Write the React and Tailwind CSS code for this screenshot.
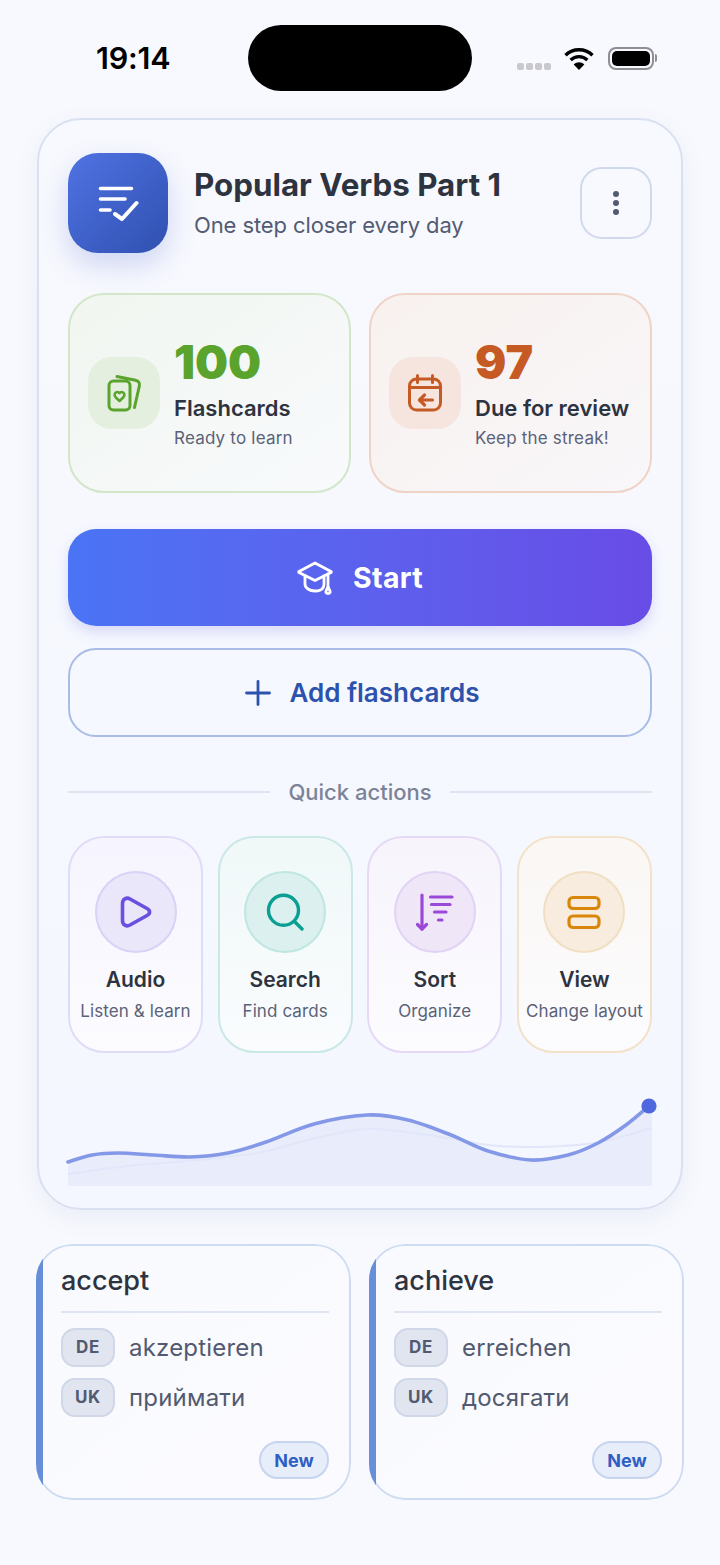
// Smooth line through points (catmull-rom to cubic)
const smooth = (pts) => {
  let d = `M${pts[0][0]} ${pts[0][1]}`;
  for (let i = 0; i < pts.length - 1; i++) {
    const p0 = pts[i - 1] || pts[i];
    const p1 = pts[i];
    const p2 = pts[i + 1];
    const p3 = pts[i + 2] || p2;
    const c1x = p1[0] + (p2[0] - p0[0]) / 6;
    const c1y = p1[1] + (p2[1] - p0[1]) / 6;
    const c2x = p2[0] - (p3[0] - p1[0]) / 6;
    const c2y = p2[1] - (p3[1] - p1[1]) / 6;
    d += ` C${c1x} ${c1y} ${c2x} ${c2y} ${p2[0]} ${p2[1]}`;
  }
  return d;
};

const mainLine = [[0, 67], [24, 60], [50, 58], [86, 60], [122, 62], [160, 58], [198, 47], [246, 29], [299, 20], [340, 25], [383, 40], [420, 56], [463, 65], [500, 60], [530, 48], [558, 30], [581, 11]];
const softLine = [[0, 79], [60, 71], [130, 65], [190, 58], [240, 45], [299, 34], [360, 40], [420, 50], [467, 52], [526, 48], [584, 33]];

const StatusBar = () => (
  <div className="flex h-[118px] items-start">
    <div className="mt-[40px] ml-[96px] w-[152px] text-[30.5px] leading-9 font-semibold tracking-[-0.2px] text-black">
      19:14
    </div>
    <div className="mt-[25px] h-[66px] w-[224px] rounded-[33px] bg-black" />
    <div className="mt-[46px] ml-[45px] flex items-center">
      <div className="mt-[1px] flex gap-[2px] pt-[16px]">
        <span className="h-[7px] w-[7px] rounded-[2px] bg-[#c9c9cd]" />
        <span className="h-[7px] w-[7px] rounded-[2px] bg-[#c9c9cd]" />
        <span className="h-[7px] w-[7px] rounded-[2px] bg-[#c9c9cd]" />
        <span className="h-[7px] w-[7px] rounded-[2px] bg-[#c9c9cd]" />
      </div>
      <svg className="ml-[13px]" width="30" height="23" viewBox="0 0 30 23" fill="none" stroke="black" strokeWidth="3.4">
        <path d="M1.5 8.2C9 1 21 1 28.5 8.2" />
        <path d="M6.6 13C11.5 8.5 18.5 8.5 23.4 13" />
        <path d="M15 23L9.7 17.4C12.8 14.6 17.2 14.6 20.3 17.4Z" fill="black" stroke="none" />
      </svg>
      <div className="ml-[14px] flex items-center">
        <div className="h-[23px] w-[46px] rounded-[8px] border-2 border-[#8e8e93] p-[2px]">
          <div className="h-full w-full rounded-[5px] bg-black" />
        </div>
        <div className="ml-[1px] h-[8px] w-[2px] rounded-r-[2px] bg-[#8e8e93]" />
      </div>
    </div>
  </div>
);

const StatCard = ({ icon, iconBg, number, numColor, title, sub, box }) => (
  <div className={`flex h-[200px] items-center rounded-[36px] border-2 pl-[18px] ${box}`}>
    <div className={`flex h-[72px] w-[72px] shrink-0 items-center justify-center rounded-[24px] ${iconBg}`}>{icon}</div>
    <div className="ml-[14px]">
      <div className={`text-[46.5px] leading-[52px] font-[860] ${numColor}`}>{number}</div>
      <div className="mt-[6px] text-[22px] leading-7 font-semibold whitespace-nowrap text-[#2e3340]">{title}</div>
      <div className="mt-[4px] text-[17px] leading-6 tracking-[0.2px] whitespace-nowrap text-[#5a6278]">{sub}</div>
    </div>
  </div>
);

const ActionCard = ({ icon, title, sub, box, circle }) => (
  <div className={`flex h-[217px] flex-col items-center rounded-[36px] border-2 pt-[33px] ${box}`}>
    <div className={`flex h-[82px] w-[82px] items-center justify-center rounded-full border-2 ${circle}`}>{icon}</div>
    <div className="mt-[13px] text-[21px] leading-7 font-semibold text-[#2e3340]">{title}</div>
    <div className="mt-[5px] text-[17px] leading-6 tracking-[0.1px] whitespace-nowrap text-[#5a6278]">{sub}</div>
  </div>
);

const WordCard = ({ word, de, uk }) => (
  <div className="relative h-[256px] overflow-hidden rounded-[36px] bg-linear-to-br from-[#f9fafe] to-[#fbfbff]">
    {/* accent strip, clipped by the round corners */}
    <div className="absolute top-0 bottom-0 left-0 w-[7px] bg-[#678fd9]" />
    <div className="h-full rounded-[36px] border-2 border-[#cfdbf2] pt-[18px] pr-[20px] pl-[23px]">
      <div className="border-b-2 border-[#dfe4f3] pb-[13px] text-[27px] leading-[34px] font-medium text-[#2e3340]">{word}</div>
      <div className="mt-[15px] flex flex-col gap-[11px]">
        <div className="flex items-center gap-[14px]">
          <span className="flex h-[39px] w-[54px] items-center justify-center rounded-[14px] border-2 border-[#cfd7e8] bg-[#e1e5ef] text-[17px] font-bold tracking-[0.6px] text-[#515a70]">DE</span>
          <span className="text-[24px] tracking-[0.2px] text-[#515a70]">{de}</span>
        </div>
        <div className="flex items-center gap-[14px]">
          <span className="flex h-[39px] w-[54px] items-center justify-center rounded-[14px] border-2 border-[#cfd7e8] bg-[#e1e5ef] text-[17px] font-bold tracking-[0.6px] text-[#515a70]">UK</span>
          <span className="text-[24px] tracking-[0.2px] text-[#515a70]">{uk}</span>
        </div>
      </div>
      <div className="mt-[24px] flex justify-end">
        <span className="flex h-[38px] w-[70px] items-center justify-center rounded-full border-2 border-[#c6d4f0] bg-[#e7edf9] text-[18px] font-bold text-[#2f5fc4]">New</span>
      </div>
    </div>
  </div>
);

const App = () => {
  return (
    <div className="min-h-[1565px] w-[720px] bg-[#f8f9fe] font-['Inter',sans-serif]">
      <StatusBar />

      <div className="mx-[37px] h-[1092px] rounded-[44px] border-2 border-[#d9e0f0] bg-linear-to-b from-[#f8f9fe] to-[#f4f7ff] px-[29px] pt-[33px] shadow-[0_8px_24px_rgba(80,100,170,0.08)]">
        {/* Header */}
        <div className="flex items-center">
          <div className="flex h-[100px] w-[100px] items-center justify-center rounded-[30px] bg-linear-to-br from-[#4f73e3] to-[#3050b0] shadow-[0_12px_28px_rgba(60,90,200,0.22)]">
            <svg width="42" height="38" viewBox="0 0 42 38" fill="none" stroke="white" strokeWidth="3.6" strokeLinecap="round" strokeLinejoin="round">
              <path d="M3.5 4.5H34.5" />
              <path d="M3.5 15H28" />
              <path d="M3.5 26H13" />
              <path d="M18 30L25 35L39.5 19" strokeWidth="4" />
            </svg>
          </div>
          <div className="ml-[26px] flex-1 pt-[1px]">
            <div className="-mt-[3px] text-[31.3px] leading-[38px] font-bold whitespace-nowrap text-[#2e3340]">Popular Verbs Part 1</div>
            <div className="mt-[7px] text-[22px] leading-7 tracking-[-0.1px] text-[#535b72]">One step closer every day</div>
          </div>
          <div className="flex h-[72px] w-[72px] flex-col items-center justify-center gap-[3px] rounded-[22px] border-2 border-[#d0d9ec]">
            <span className="h-[6px] w-[6px] rounded-full bg-[#535b72]" />
            <span className="h-[6px] w-[6px] rounded-full bg-[#535b72]" />
            <span className="h-[6px] w-[6px] rounded-full bg-[#535b72]" />
          </div>
        </div>

        {/* Stats */}
        <div className="mt-[40px] grid grid-cols-2 gap-[18px]">
          <StatCard
            box="border-[#d3e6c9] bg-linear-to-br from-[#f1f6f0] to-[#f8fafc]"
            iconBg="bg-[#e5efe0]"
            number="100"
            numColor="text-[#5aa32c]"
            title="Flashcards"
            sub="Ready to learn"
            icon={
              <svg width="36" height="38" viewBox="0 0 36 38" fill="none" stroke="#5aa32c" strokeWidth="3" strokeLinecap="round" strokeLinejoin="round">
                <rect x="3" y="7" width="21" height="29" rx="4.5" />
                <path d="M11 2.5L29.5 6.2C32.4 6.8 34 9 33.4 11.8L28.5 33.5" />
                <path d="M13.5 27L9.6 23.2C7.6 21 9 18 11.3 18C12.4 18 13.1 18.5 13.5 19.2C13.9 18.5 14.6 18 15.7 18C18 18 19.4 21 17.4 23.2Z" strokeWidth="2.6" />
              </svg>
            }
          />
          <StatCard
            box="border-[#f0d3c7] bg-linear-to-br from-[#f8f1ee] to-[#f9f7fa]"
            iconBg="bg-[#f5e5de]"
            number="97"
            numColor="text-[#c65a24]"
            title="Due for review"
            sub="Keep the streak!"
            icon={
              <svg width="36" height="38" viewBox="0 0 36 38" fill="none" stroke="#c65a24" strokeWidth="3" strokeLinecap="round" strokeLinejoin="round">
                <rect x="2.5" y="5" width="31" height="31" rx="7" />
                <path d="M10.5 1.5V8.5" />
                <path d="M25.5 1.5V8.5" />
                <path d="M2.5 13.5H33.5" />
                <path d="M25.5 26H12.5" strokeWidth="3.2" />
                <path d="M17.5 21L12.5 26L17.5 31" strokeWidth="3.2" />
              </svg>
            }
          />
        </div>

        {/* Buttons */}
        <button className="mt-[36px] flex h-[97px] w-full items-center justify-center gap-[20px] rounded-[28px] bg-linear-to-r from-[#4a74f5] to-[#684ce6] shadow-[0_6px_14px_rgba(80,80,210,0.18)]">
          <svg width="36" height="34" viewBox="0 0 36 34" fill="none" stroke="white" strokeWidth="2.8" strokeLinecap="round" strokeLinejoin="round">
            <path d="M18 2L2 10.4C1.6 10.7 1.6 11.3 2 11.6L18 19.6L34 11.6C34.4 11.3 34.4 10.7 34 10.4Z" />
            <path d="M8 15V23C8 27 12.5 30 18 30C20 30 22 29.6 23.5 28.9C25.5 28 27 26 27 23V15" />
            <path d="M31 13V26" />
            <path d="M31 26L33 30C33.6 31.6 32.6 32.5 31 32.5C29.4 32.5 28.4 31.6 29 30Z" />
          </svg>
          <span className="mt-[2px] text-[28.5px] font-bold tracking-[0.3px] text-white">Start</span>
        </button>

        <button className="mt-[22px] flex h-[89px] w-full items-center justify-center gap-[17px] rounded-[28px] border-2 border-[#a9bce6] pl-[2px]">
          <svg width="30" height="26" viewBox="0 0 30 26" fill="none" stroke="#2d52ad" strokeWidth="2.8" strokeLinecap="round">
            <path d="M16 1.5V24.5" />
            <path d="M4.5 13H27.5" />
          </svg>
          <span className="text-[26px] font-semibold text-[#2d52ad]">Add flashcards</span>
        </button>

        {/* Quick actions */}
        <div className="mt-[41px] flex items-center">
          <div className="h-[2px] w-[202px] bg-[#dfe4f3]" />
          <div className="flex-1 text-center text-[22px] leading-7 font-medium text-[#7c8396]">Quick actions</div>
          <div className="h-[2px] w-[202px] bg-[#dfe4f3]" />
        </div>

        <div className="mt-[30px] grid grid-cols-4 gap-[14.67px]">
          <ActionCard
            box="border-[#e0dcf8] bg-linear-to-b from-[#f6f4fe] to-[#fcfcff]"
            circle="border-[#d9d2f6] bg-[#ebe7fa]"
            title="Audio"
            sub="Listen & learn"
            icon={
              <svg width="34" height="36" viewBox="0 0 34 36" fill="none" stroke="#6a4fe0" strokeWidth="3.6" strokeLinejoin="round">
                <path d="M3.5 9.5C3.5 5 7.5 3 11 5L28 14.5C31.5 16.3 31.5 19.7 28 21.5L11 31C7.5 33 3.5 31 3.5 26.5Z" />
              </svg>
            }
          />
          <ActionCard
            box="border-[#c9e8e6] bg-linear-to-b from-[#f0f8f8] to-[#fafcfe]"
            circle="border-[#bfe6e2] bg-[#dbf0ef]"
            title="Search"
            sub="Find cards"
            icon={
              <svg width="38" height="38" viewBox="0 0 38 38" fill="none" stroke="#0a9f92" strokeWidth="3.4" strokeLinecap="round">
                <circle cx="17.5" cy="17.3" r="15" />
                <path d="M28.5 28.5L36 36" />
              </svg>
            }
          />
          <ActionCard
            box="border-[#e6d9f6] bg-linear-to-b from-[#f7f4fc] to-[#fcfcff]"
            circle="border-[#e2d3f4] bg-[#efe6f8]"
            title="Sort"
            sub="Organize"
            icon={
              <svg width="38" height="38" viewBox="0 0 38 38" fill="none" stroke="#9b49d8" strokeWidth="3.2" strokeLinecap="round" strokeLinejoin="round">
                <path d="M6 2V36" />
                <path d="M1.5 31.5L6 36L10.5 31.5" />
                <path d="M14.5 4H36" />
                <path d="M15.5 11.5H34" />
                <path d="M18.5 19H30" />
                <path d="M22.5 27H26" />
              </svg>
            }
          />
          <ActionCard
            box="border-[#f3e2c9] bg-linear-to-b from-[#faf7f4] to-[#fcfcfe]"
            circle="border-[#f0dfc3] bg-[#f7ecdd]"
            title="View"
            sub="Change layout"
            icon={
              <svg width="36" height="36" viewBox="0 0 36 36" fill="none" stroke="#d9870b" strokeWidth="3.2">
                <rect x="3" y="3.5" width="30" height="11" rx="4" />
                <rect x="3" y="22" width="30" height="11.5" rx="4" />
              </svg>
            }
          />
        </div>

        {/* Progress curve */}
        <svg className="mt-[42px] overflow-visible" width="584" height="91" viewBox="0 0 584 91" fill="none">
          <path d={`${smooth(mainLine)} L584 8 V91 H0 Z`} fill="#e9edfb" />
          <path d={smooth(softLine)} stroke="#e1e6f9" strokeWidth="2" />
          <path d={smooth(mainLine)} stroke="#8398e6" strokeWidth="3.6" strokeLinecap="round" />
          <circle cx="581" cy="11" r="7.6" fill="#4d69dd" />
        </svg>
      </div>

      {/* Word cards */}
      <div className="mx-[36px] mt-[34px] grid grid-cols-2 gap-[18px]">
        <WordCard word="accept" de="akzeptieren" uk="приймати" />
        <WordCard word="achieve" de="erreichen" uk="досягати" />
      </div>
    </div>
  );
};

export default App;
